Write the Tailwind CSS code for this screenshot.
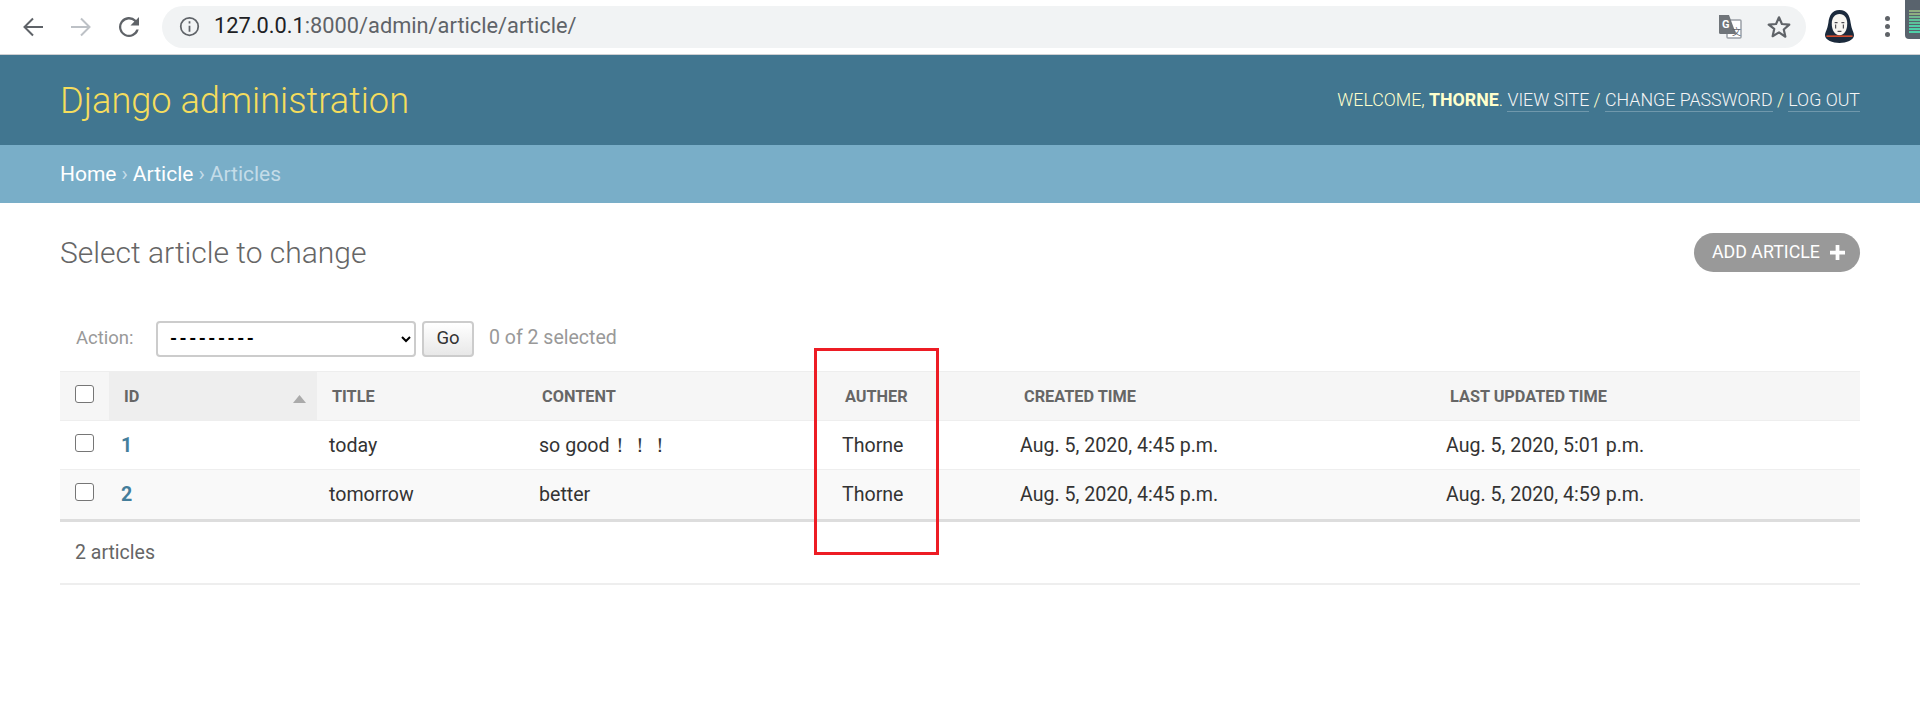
<!DOCTYPE html>
<html lang="en">
<head>
<meta charset="utf-8">
<title>Select article to change</title>
<script src="https://cdn.jsdelivr.net/npm/@tailwindcss/browser@4"></script>
</head>
<body class="relative h-[728px] overflow-hidden bg-white font-['Roboto',sans-serif] text-[#333]">
<!-- browser toolbar -->
<div class="relative flex h-[55px] items-center border-b border-[#cfd0d3] bg-white pb-[1px]">
  <div class="flex w-[162px] items-center">
    <svg class="ml-[21px] h-[24px] w-[24px]" viewBox="0 0 24 24" fill="none" stroke="#5f6368" stroke-width="2"><path d="M22 12H4M12 3.500 3.500 12l8.500 8.500"/></svg>
    <svg class="ml-[24px] h-[24px] w-[24px]" viewBox="0 0 24 24" fill="none" stroke="#bdc1c6" stroke-width="2"><path d="M2 12h18M12 3.500l8.500 8.500-8.500 8.500"/></svg>
    <svg class="ml-[24px] h-[24px] w-[24px]" viewBox="0 0 24 24" fill="#5f6368"><path d="M19.100 4.900A10 10 0 1 0 21.700 14.500h-2.400a7.700 7.700 0 1 1-1.900-7.900L13.500 10.500H22V2z"/></svg>
  </div>
  <div class="flex h-[42px] w-[1644px] items-center rounded-full bg-[#f1f3f4]">
    <svg class="ml-[17px] h-[21px] w-[21px]" viewBox="0 0 24 24" fill="none" stroke="#5f6368" stroke-width="2"><circle cx="12" cy="12" r="10"/><path d="M12 11v7M12 6v2.500"/></svg>
    <div class="ml-[14px] text-[21.800px] text-[#5f6368]"><span class="text-[#202124]">127.0.0.1</span>:8000/admin/article/article/</div>
    <div class="ml-auto flex items-center">
      <svg class="h-[26px] w-[24px]" viewBox="0 0 24 26"><rect x="9" y="6" width="14" height="18" rx="1" fill="#fff" stroke="#9aa0a6" stroke-width="1.500"/><path d="M1 1h10l7 19H2.500A1.500 1.500 0 0 1 1 18.500z" fill="#70757a"/><text x="4" y="14" font-size="11" font-weight="700" fill="#fff" font-family="Roboto">G</text><text x="14" y="21" font-size="9" fill="#5f6368" font-family="'Noto Sans CJK SC',sans-serif">文</text></svg>
      <svg class="ml-[24px] mr-[14px] h-[26px] w-[26px]" viewBox="0 0 24 24" fill="none" stroke="#5f6368" stroke-width="2" stroke-linejoin="round"><path d="m12 3 2.700 6.200 6.800.6-5.100 4.500 1.500 6.700L12 17l-5.900 3.500 1.500-6.700L2.500 9.800l6.800-.6z"/></svg>
    </div>
  </div>
  <svg class="ml-[19px] h-[33px] w-[29px]" viewBox="0 0 30 34"><path d="M15 0C7 0 4.500 6 3.500 13 2.500 20 0 23 0 26c0 5 8 8 15 8s15-3 15-8c0-3-2.500-6-3.500-13C25.500 6 23 0 15 0z" fill="#1b2a3c"/><path d="M15 4c-5 0-8 4-8 10 0 7 3 12 8 12s8-5 8-12c0-6-3-10-8-10z" fill="#f7f6f1"/><path d="M1.500 27h27" stroke="#e8502c" stroke-width="1.500"/><path d="M10 13h3M17 13h3M11 15v4M19 15v4M13 22h4" stroke="#4b4b50" stroke-width="1.200"/></svg>
  <div class="ml-[31px] flex flex-col gap-[3px]">
    <div class="h-[5px] w-[5px] rounded-full bg-[#5f6368]"></div>
    <div class="h-[5px] w-[5px] rounded-full bg-[#5f6368]"></div>
    <div class="h-[5px] w-[5px] rounded-full bg-[#5f6368]"></div>
  </div>
  <div class="absolute right-0 top-0 flex h-[39px] w-[15px] flex-col justify-end gap-[1px] rounded-bl-[4px] bg-[#59636d] pb-[6px] pl-[4px]">
    <div class="h-[2px] bg-[#8fae80]"></div><div class="h-[2px] bg-[#8fae80]"></div><div class="h-[2px] bg-[#6fb890]"></div><div class="h-[2px] bg-[#5cc29a]"></div><div class="h-[2px] bg-[#5cc29a]"></div><div class="h-[2px] bg-[#4fd0a8]"></div><div class="h-[2px] bg-[#4fd0a8]"></div><div class="h-[2px] bg-[#4fd0a8]"></div>
  </div>
</div>

<!-- django header -->
<header class="flex h-[90px] items-center justify-between bg-[#417690] px-[60px]">
  <div class="pt-[2px] text-[36.200px] font-light text-[#f5dd5d]">Django administration</div>
  <div class="pt-[1px] text-[17.800px] font-light uppercase text-[#ffc]">Welcome, <strong class="font-bold">Thorne</strong>. <a class="border-b border-white/25 pb-[1px] text-[#f5f5f5]">View site</a> / <a class="border-b border-white/25 pb-[1px] text-[#f5f5f5]">Change password</a> / <a class="border-b border-white/25 pb-[1px] text-[#f5f5f5]">Log out</a></div>
</header>
<nav class="flex h-[58px] items-center bg-[#79aec8] px-[60px] pt-[1px] text-[21px] text-[#c4dce8]"><a class="text-white">Home</a><span class="px-[5px]">›</span><a class="text-white">Article</a><span class="px-[5px]">›</span>Articles</nav>

<!-- content -->
<main class="px-[60px]">
  <div class="flex h-[99px] items-center justify-between">
    <h1 class="text-[30px] font-light text-[#666]">Select article to change</h1>
    <a class="flex h-[39px] w-[166px] items-center rounded-full bg-[#999] pl-[18px] text-[17.800px] uppercase text-white">Add article<svg class="ml-[10px] h-[15px] w-[15px]" viewBox="0 0 16 16" fill="#fff"><path d="M6 0h4v6h6v4h-6v6H6v-6H0V6h6z"/></svg></a>
  </div>
  <div class="flex h-[69px] items-center pl-[16px] pt-[4px] text-[#999]">
    <label class="w-[60px] text-[18.500px]">Action:</label>
    <select class="ml-[20px] h-[36px] w-[260px] rounded-[4px] border-2 border-[#ccc] bg-white pl-[8px] text-[18px] font-bold tracking-[2.500px] text-black"><option>---------</option></select>
    <button class="ml-[6px] h-[36px] w-[52px] rounded-[4px] border-2 border-[#ccc] bg-gradient-to-b from-white to-[#e8e8e8] text-[18.500px] text-[#333]">Go</button>
    <span class="ml-[15px] pb-[1px] text-[19.500px]">0 of 2 selected</span>
  </div>
  <table class="w-[1800px] table-fixed border-collapse">
    <colgroup><col class="w-[49px]"><col class="w-[208px]"><col class="w-[210px]"><col class="w-[303px]"><col class="w-[179px]"><col class="w-[426px]"><col class="w-[425px]"></colgroup>
    <thead class="text-left text-[16.300px] font-medium uppercase text-[#666]">
      <tr class="h-[49px] border-y border-[#eee] bg-[#f6f6f6]">
        <th class="pb-[5px] pl-[15px]"><input type="checkbox" class="block h-[18px] w-[19px] appearance-none rounded-[3px] border border-[#767676] bg-white"></th>
        <th class="bg-[#eee] pl-[15px] pt-[2px]"><div class="flex items-center justify-between pr-[11px]">ID<svg class="mt-[4px] h-[8px] w-[13px]" viewBox="0 0 13 8" fill="#aaa"><path d="M6.500 0 13 8H0z"/></svg></div></th>
        <th class="pl-[15px] pt-[2px]">Title</th>
        <th class="pl-[15px] pt-[2px]">Content</th>
        <th class="pl-[15px] pt-[2px]">Auther</th>
        <th class="pl-[15px] pt-[2px]">Created time</th>
        <th class="pl-[15px] pt-[2px]">Last updated time</th>
      </tr>
    </thead>
    <tbody class="text-[19.600px] text-[#333]">
      <tr class="h-[49px] border-b border-[#eee]">
        <td class="pb-[5px] pl-[15px]"><input type="checkbox" class="block h-[18px] w-[19px] appearance-none rounded-[3px] border border-[#767676] bg-white"></td>
        <td class="pl-[12px] pt-[2px] font-bold text-[#447e9b]">1</td><td class="pl-[12px] pt-[2px]">today</td><td class="pl-[12px] pt-[2px]">so good！！！</td><td class="pl-[12px] pt-[2px]">Thorne</td><td class="pl-[11px] pt-[2px]">Aug. 5, 2020, 4:45 p.m.</td><td class="pl-[11px] pt-[2px]">Aug. 5, 2020, 5:01 p.m.</td>
      </tr>
      <tr class="h-[51px] border-b-[3px] border-[#ddd] bg-[#f9f9f9]">
        <td class="pb-[6px] pl-[15px]"><input type="checkbox" class="block h-[18px] w-[19px] appearance-none rounded-[3px] border border-[#767676] bg-white"></td>
        <td class="pl-[12px] font-bold text-[#447e9b]">2</td><td class="pl-[12px]">tomorrow</td><td class="pl-[12px]">better</td><td class="pl-[12px]">Thorne</td><td class="pl-[11px]">Aug. 5, 2020, 4:45 p.m.</td><td class="pl-[11px]">Aug. 5, 2020, 4:59 p.m.</td>
      </tr>
    </tbody>
  </table>
  <div class="flex h-[63px] items-center border-b-2 border-[#eee] pl-[15px] text-[19.500px] text-[#666]">2 articles</div>
</main>
<div class="absolute left-[814px] top-[348px] h-[207px] w-[125px] border-[3px] border-[#ed1c24]"></div>
</body>
</html>
